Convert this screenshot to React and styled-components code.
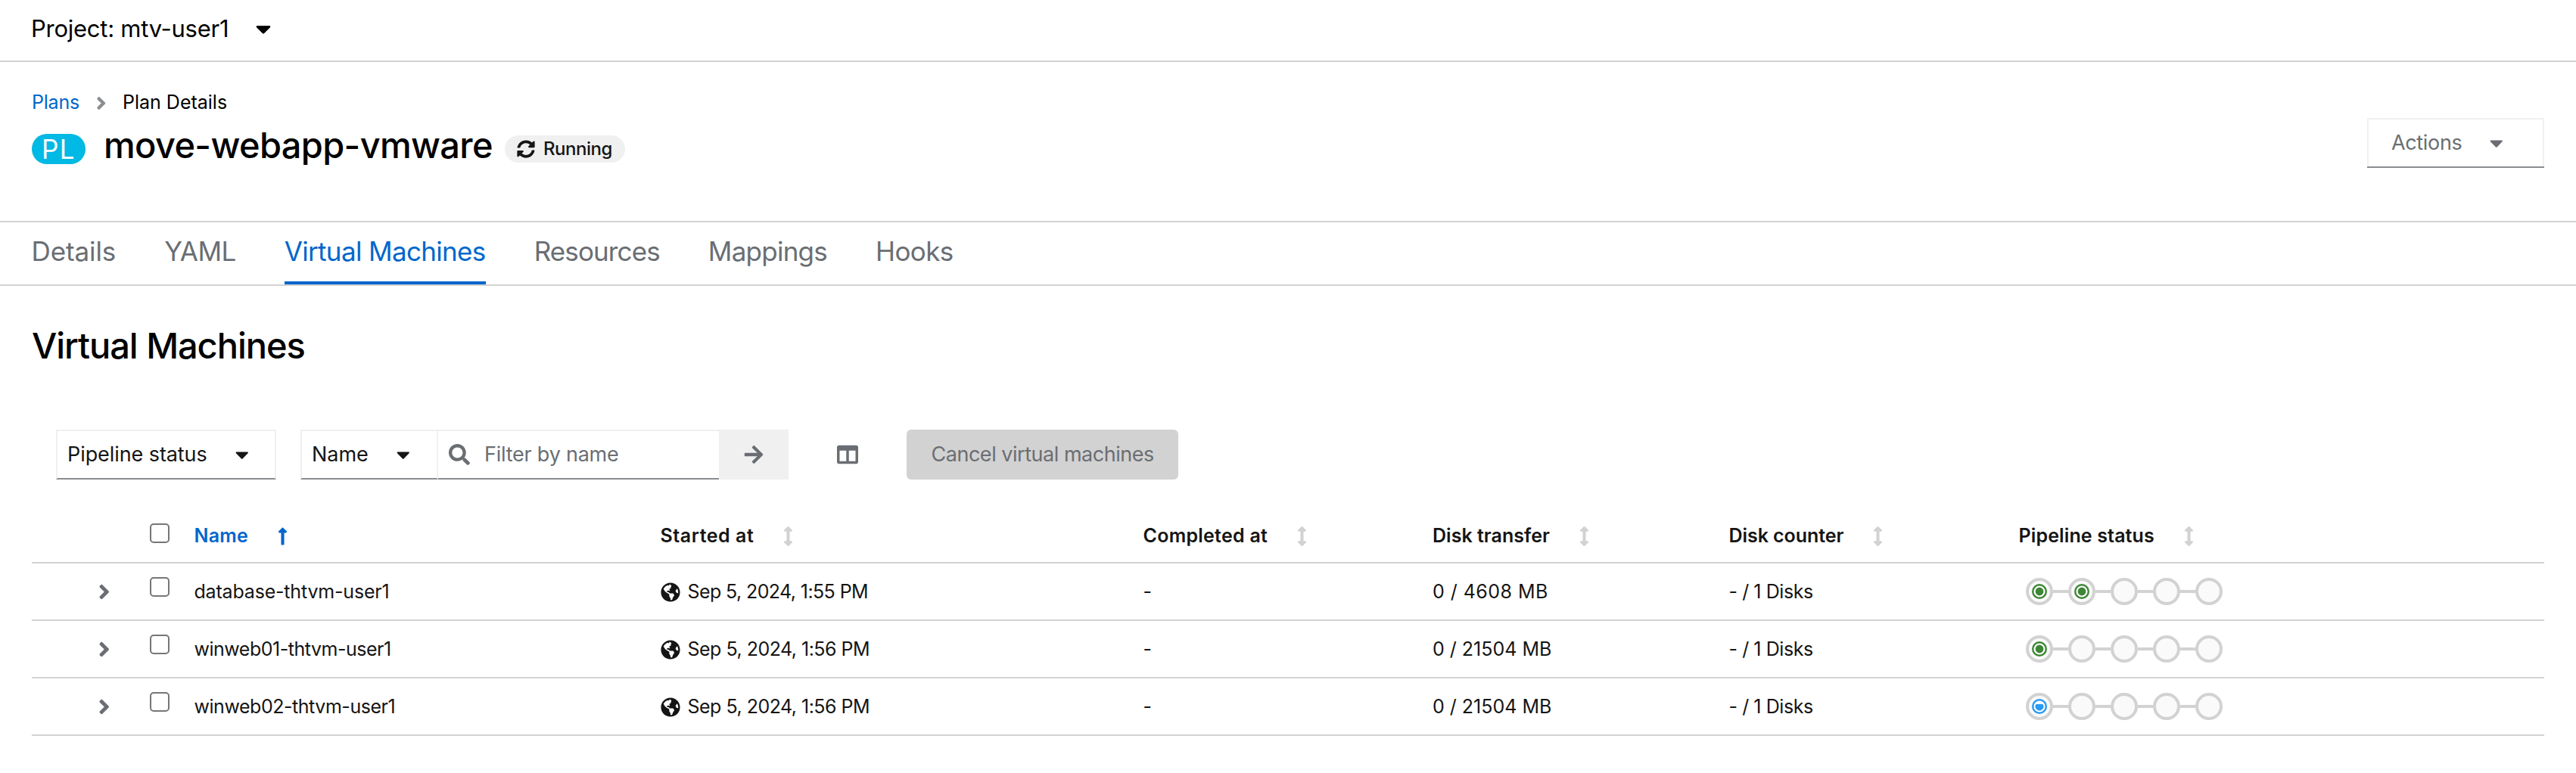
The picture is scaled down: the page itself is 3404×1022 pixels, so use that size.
import React from 'react';
import styled, { createGlobalStyle } from 'styled-components';
import {
  FaAngleRight,
  FaArrowRight,
  FaArrowsAltV,
  FaCaretDown,
  FaColumns,
  FaGlobeAmericas,
  FaLongArrowAltUp,
  FaSearch,
  FaSyncAlt,
} from 'react-icons/fa';

const color = {
  text: '#151515',
  muted: '#6a6e73',
  link: '#0066cc',
  line: '#d2d2d2',
  light: '#f0f0f0',
  edge: '#8a8d90',
};

const GlobalStyle = createGlobalStyle`
  * { box-sizing: border-box; }
  body {
    margin: 0;
    background: #fff;
    color: ${color.text};
    font-family: Inter, "Liberation Sans", sans-serif;
  }
  svg { display: block; flex: none; }
`;

const Icon = styled.span`
  display: flex;
  flex: none;
  color: ${(p) => p.$color || 'inherit'};
  svg {
    width: ${(p) => p.$size * (p.$ratio || 1)}px;
    height: ${(p) => p.$size}px;
  }
`;

const Text = styled.span`
  font-size: ${(p) => p.$size || 25}px;
  font-weight: ${(p) => p.$weight || 400};
  letter-spacing: ${(p) => p.$track || 0}em;
  line-height: 1.25;
  white-space: nowrap;
`;

const Page = styled.div`
  width: 3404px;
  height: 1022px;
  display: flex;
  flex-direction: column;
`;

const ProjectBar = styled.div`
  display: flex;
  align-items: center;
  gap: 36px;
  height: 82px;
  padding: 0 42px 4px 41px;
  border-bottom: 2px solid ${color.line};
  color: #000;
`;

const Header = styled.header`
  display: flex;
  justify-content: space-between;
  align-items: flex-start;
  height: 210px;
  padding: 36px 42px 0 42px;
`;

const Breadcrumb = styled.nav`
  display: flex;
  align-items: center;
  height: 36px;
  color: #000;
`;

const CrumbLink = styled(Text)`
  width: 85px;
  color: ${color.link};
`;

const CrumbSeparator = styled(Icon)`
  width: 35px;
`;

const TitleRow = styled.div`
  display: flex;
  align-items: center;
  height: 70px;
  margin-top: 8px;
`;

const Badge = styled.span`
  display: flex;
  align-items: center;
  width: 71px;
  height: 40px;
  padding-left: 13px;
  border-radius: 20px;
  background: #00b9e4;
  color: #fff;
  font-size: 35px;
  letter-spacing: 0.04em;
`;

const Title = styled.h1`
  margin: 0 16px 0 24px;
  padding-bottom: 10px;
  color: #000;
  font-size: 47px;
  font-weight: 500;
  line-height: 60px;
  letter-spacing: -0.014em;
`;

const StatusLabel = styled.span`
  display: flex;
  align-items: center;
  gap: 11px;
  width: 159px;
  height: 36px;
  padding: 0 0 1px 16px;
  border-radius: 18px;
  background: ${color.light};
`;

const ActionsButton = styled.button`
  display: flex;
  align-items: center;
  gap: 37px;
  width: 234px;
  height: 64px;
  margin-top: 38px;
  padding: 0 0 0 30px;
  border: 2px solid ${color.light};
  border-bottom: 0;
  box-shadow: 0 2px 0 ${color.edge};
  background: #fff;
  color: ${color.muted};
  font-family: inherit;
`;

const Tabs = styled.nav`
  display: flex;
  gap: 64px;
  height: 86px;
  padding-left: 41.5px;
  border: solid ${color.line};
  border-width: 2px 0;
`;

const Tab = styled.div`
  display: flex;
  align-items: center;
  border-bottom: 4px solid ${(p) => (p.$active ? color.link : 'transparent')};
  color: ${(p) => (p.$active ? color.link : color.muted)};
`;

const Content = styled.main`
  padding: 49px 42px 0;
`;

const SectionTitle = styled.h2`
  margin: 0;
  color: #000;
  font-size: 47px;
  font-weight: 500;
  line-height: 60px;
  letter-spacing: -0.0222em;
`;

const Toolbar = styled.div`
  display: flex;
  height: 66px;
  margin: 81px 0 0 32px;
`;

const Select = styled.div`
  display: flex;
  align-items: center;
  gap: 37px;
  width: ${(p) => p.$width}px;
  margin-right: ${(p) => p.$after || 0}px;
  padding-left: 13px;
  border: 2px solid ${color.light};
  border-bottom-color: ${color.edge};
`;

const SearchField = styled.div`
  display: flex;
  align-items: center;
  gap: 19px;
  width: 371px;
  padding-left: 14px;
  border: solid ${color.light};
  border-width: 2px 0;
  border-bottom-color: ${color.edge};
  color: ${color.muted};
`;

const SearchSubmit = styled.div`
  display: flex;
  align-items: center;
  justify-content: center;
  width: 92px;
  background: ${color.light};
  color: ${color.muted};
`;

const ColumnsButton = styled.div`
  display: flex;
  align-items: center;
  justify-content: center;
  width: 156px;
  color: ${color.muted};
`;

const DisabledButton = styled.div`
  display: flex;
  align-items: center;
  width: 359px;
  padding-left: 32.5px;
  border-radius: 6px;
  background: ${color.line};
  color: ${color.muted};
`;

const Table = styled.div`
  padding-top: 41px;
`;

const Row = styled.div`
  display: grid;
  grid-template-columns: 68px 58.5px 616px 638px 382.5px 391.5px 383px 1fr;
  align-items: center;
  height: ${(p) => (p.$head ? 70 : 76)}px;
  padding-left: 88px;
  border-bottom: 2px solid ${color.line};
`;

const HeadCell = styled.div`
  display: flex;
  align-items: center;
  gap: 39px;
  color: ${(p) => (p.$sorted ? color.link : color.text)};
`;

const Cell = styled.div`
  display: flex;
  align-items: center;
  gap: 10px;
  padding-top: 2px;
`;

const Checkbox = styled.span`
  width: 26px;
  height: 26px;
  margin-bottom: ${(p) => (p.$head ? 8 : 12)}px;
  border: 2px solid #767676;
  border-radius: 5px;
`;

const Pipeline = styled.div`
  display: flex;
  align-items: center;
  padding-left: 9.5px;
`;

const Step = styled.span`
  display: flex;
  align-items: center;
  justify-content: center;
  width: 36px;
  height: 36px;
  border: 4px solid ${color.line};
  border-radius: 50%;
  background: #fafafa;
`;

const Connector = styled.span`
  width: 20px;
  height: 4px;
  background: ${color.line};
`;

function StepIcon({ state }) {
  const fill = state === 'done' ? '#3e8635' : '#2b9af3';
  return (
    <svg width="20" height="20" viewBox="0 0 20 20">
      <circle cx="10" cy="10" r="8.8" fill="#fff" stroke={fill} strokeWidth="2.4" />
      {state === 'done' ? (
        <circle cx="10" cy="10" r="5.4" fill={fill} />
      ) : (
        <path d="M5.5 7h9a5.4 5.4 0 1 1-9 0z" fill={fill} />
      )}
    </svg>
  );
}

function PipelineStatus({ steps }) {
  return (
    <Pipeline>
      {steps.map((state, i) => (
        <React.Fragment key={i}>
          {i > 0 && <Connector />}
          <Step>{state && <StepIcon state={state} />}</Step>
        </React.Fragment>
      ))}
    </Pipeline>
  );
}

const tabs = [
  { label: 'Details', track: -0.0025 },
  { label: 'YAML', track: -0.0165 },
  { label: 'Virtual Machines', track: -0.0187, active: true },
  { label: 'Resources', track: -0.0252 },
  { label: 'Mappings', track: -0.0214 },
  { label: 'Hooks', track: -0.0175 },
];

const columns = [
  { label: 'Name', track: 0.0087, sorted: true },
  { label: 'Started at', track: 0.022 },
  { label: 'Completed at', track: 0.0102 },
  { label: 'Disk transfer', track: 0.0011 },
  { label: 'Disk counter', track: -0.0022 },
  { label: 'Pipeline status', track: 0.0052 },
];

const machines = [
  {
    name: 'database-thtvm-user1', nameTrack: -0.0075,
    started: 'Sep 5, 2024, 1:55 PM', startedTrack: -0.024,
    transfer: '0 / 4608 MB', transferTrack: 0.0186,
    steps: ['done', 'done', null, null, null],
  },
  {
    name: 'winweb01-thtvm-user1', nameTrack: -0.0192,
    started: 'Sep 5, 2024, 1:56 PM', startedTrack: -0.0204,
    transfer: '0 / 21504 MB', transferTrack: 0,
    steps: ['done', null, null, null, null],
  },
  {
    name: 'winweb02-thtvm-user1', nameTrack: -0.0183,
    started: 'Sep 5, 2024, 1:56 PM', startedTrack: -0.0204,
    transfer: '0 / 21504 MB', transferTrack: 0,
    steps: ['active', null, null, null, null],
  },
];

export default function App() {
  return (
    <Page>
      <GlobalStyle />
      <ProjectBar>
        <Text $size={31} $track={-0.0085}>Project: mtv-user1</Text>
        <Icon $size={32} $ratio={0.625}><FaCaretDown /></Icon>
      </ProjectBar>

      <Header>
        <div>
          <Breadcrumb>
            <CrumbLink $track={-0.0083}>Plans</CrumbLink>
            <CrumbSeparator $size={27} $ratio={0.5} $color={color.edge}><FaAngleRight /></CrumbSeparator>
            <Text>Plan Details</Text>
          </Breadcrumb>
          <TitleRow>
            <Badge>PL</Badge>
            <Title>move-webapp-vmware</Title>
            <StatusLabel>
              <Icon $size={24}><FaSyncAlt /></Icon>
              <Text $size={24} $weight={500} $track={-0.0198}>Running</Text>
            </StatusLabel>
          </TitleRow>
        </div>
        <ActionsButton>
          <Text $size={27} $track={-0.0128}>Actions</Text>
          <Icon $size={28} $ratio={0.625}><FaCaretDown /></Icon>
        </ActionsButton>
      </Header>

      <Tabs>
        {tabs.map((t) => (
          <Tab key={t.label} $active={t.active}>
            <Text $size={35} $track={t.track}>{t.label}</Text>
          </Tab>
        ))}
      </Tabs>

      <Content>
        <SectionTitle>Virtual Machines</SectionTitle>

        <Toolbar>
          <Select $width={291} $after={32}>
            <Text $size={27} $track={-0.0029}>Pipeline status</Text>
            <Icon $size={28} $ratio={0.625}><FaCaretDown /></Icon>
          </Select>
          <Select $width={182}>
            <Text $size={27} $track={-0.0019}>Name</Text>
            <Icon $size={28} $ratio={0.625}><FaCaretDown /></Icon>
          </Select>
          <SearchField>
            <Icon $size={28}><FaSearch /></Icon>
            <Text $size={27} $track={-0.0086}>Filter by name</Text>
          </SearchField>
          <SearchSubmit><Icon $size={28}><FaArrowRight /></Icon></SearchSubmit>
          <ColumnsButton><Icon $size={28}><FaColumns /></Icon></ColumnsButton>
          <DisabledButton>
            <Text $size={27} $track={-0.0176}>Cancel virtual machines</Text>
          </DisabledButton>
        </Toolbar>

        <Table>
          <Row $head>
            <span />
            <Checkbox $head />
            {columns.map((c) => (
              <HeadCell key={c.label} $sorted={c.sorted}>
                <Text $weight={600} $track={c.track}>{c.label}</Text>
                <Icon $size={26} $ratio={0.5} $color={c.sorted ? color.link : color.line}>
                  {c.sorted ? <FaLongArrowAltUp /> : <FaArrowsAltV />}
                </Icon>
              </HeadCell>
            ))}
          </Row>
          {machines.map((m) => (
            <Row key={m.name}>
              <Icon $size={31} $ratio={0.5} $color={color.muted}><FaAngleRight /></Icon>
              <Checkbox />
              <Cell><Text $track={m.nameTrack}>{m.name}</Text></Cell>
              <Cell>
                <Icon $size={26}><FaGlobeAmericas /></Icon>
                <Text $track={m.startedTrack}>{m.started}</Text>
              </Cell>
              <Cell><Text>-</Text></Cell>
              <Cell><Text $track={m.transferTrack}>{m.transfer}</Text></Cell>
              <Cell><Text $track={-0.0171}>- / 1 Disks</Text></Cell>
              <PipelineStatus steps={m.steps} />
            </Row>
          ))}
        </Table>
      </Content>
    </Page>
  );
}
